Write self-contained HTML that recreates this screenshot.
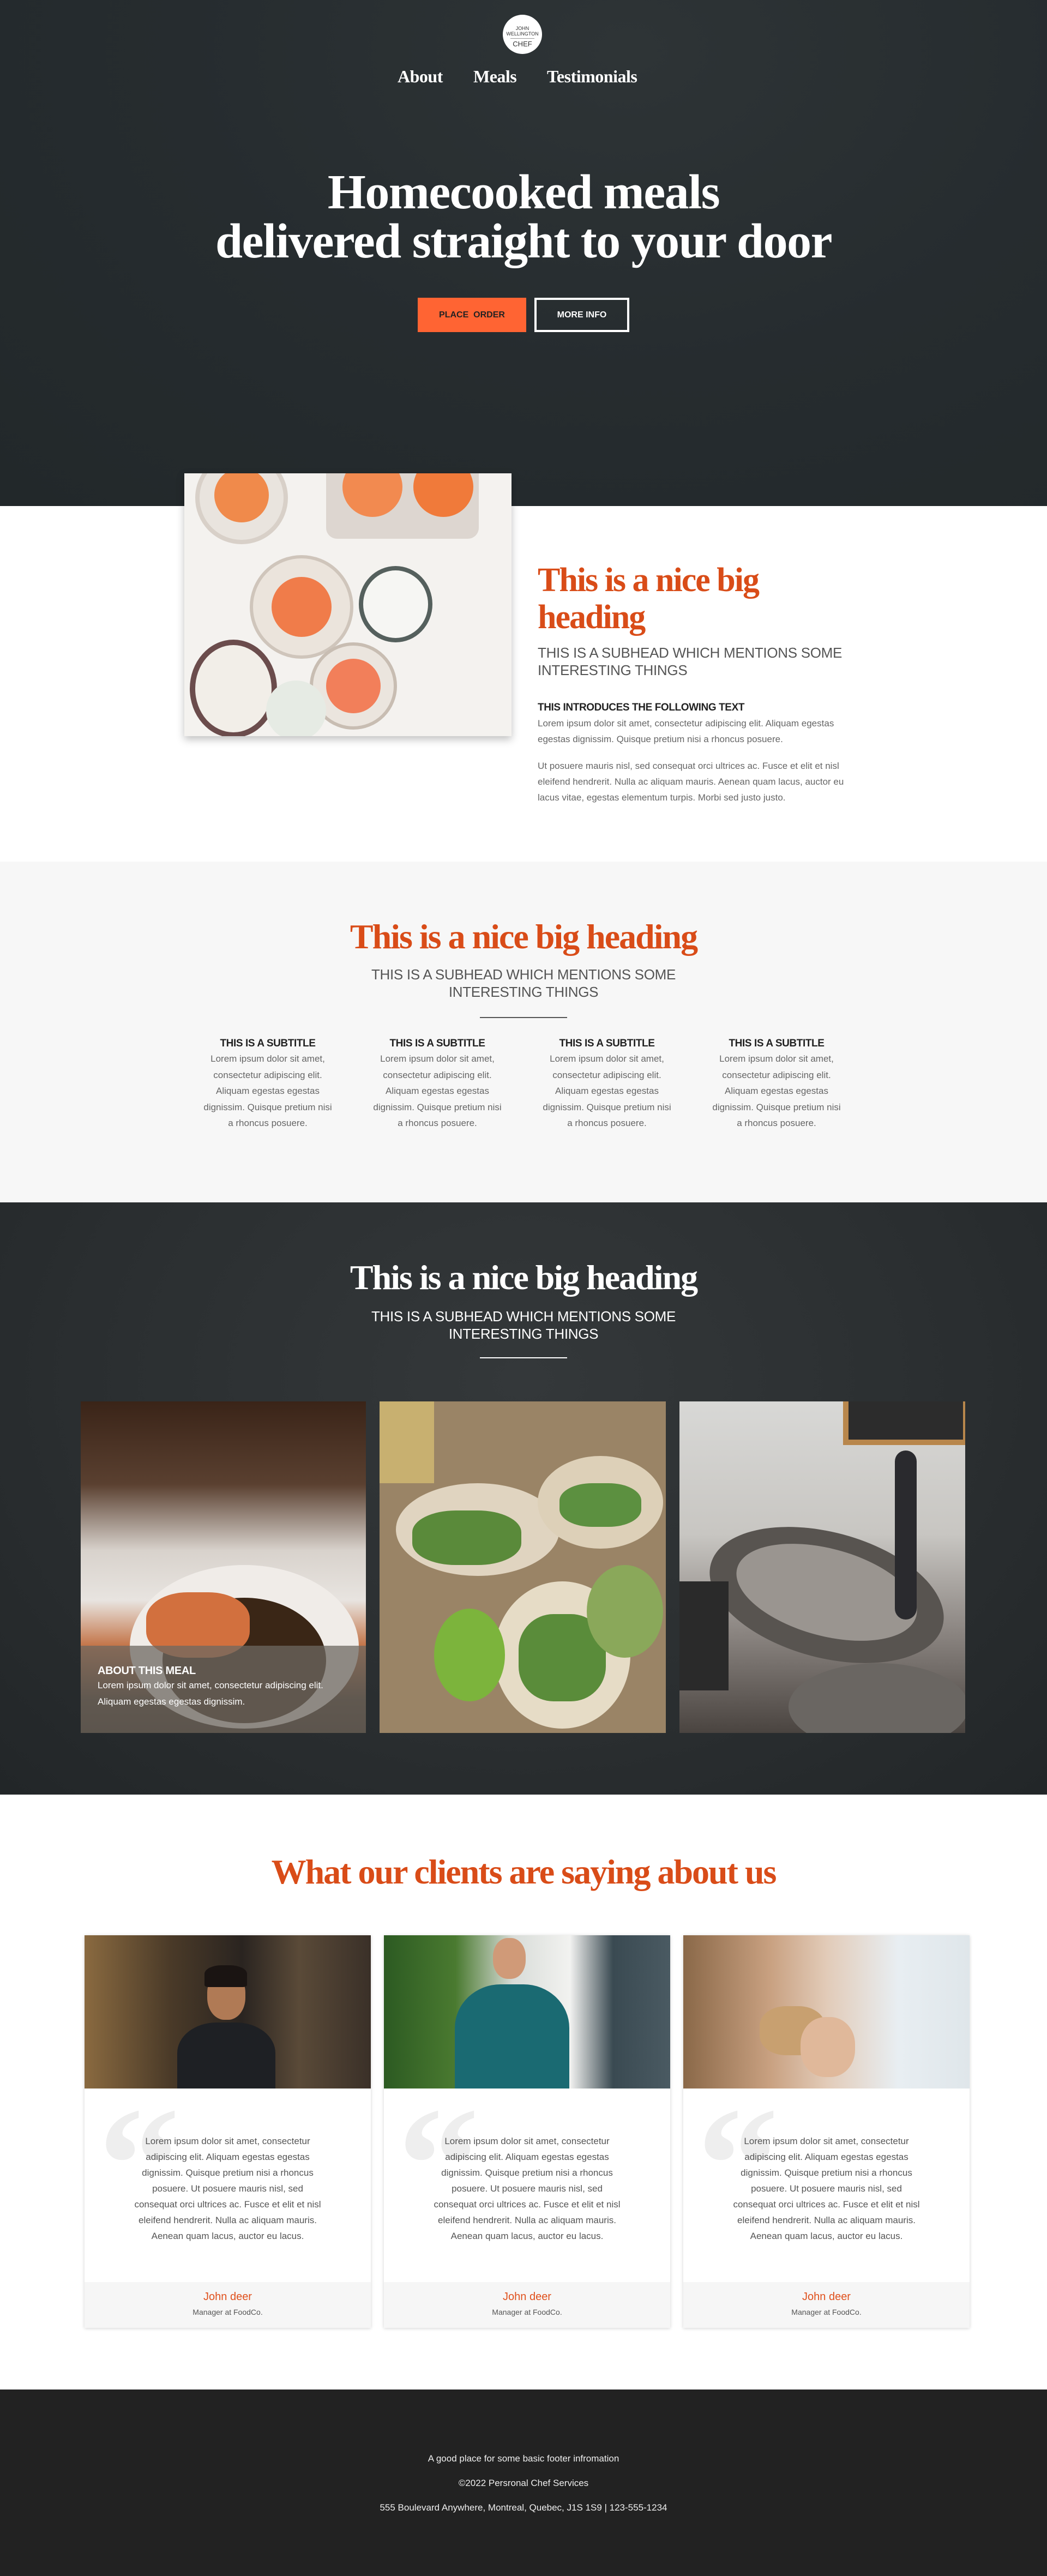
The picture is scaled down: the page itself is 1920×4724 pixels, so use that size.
<!DOCTYPE html>
<html><head><meta charset="utf-8"><style>
*{margin:0;padding:0;box-sizing:border-box}
body{width:1920px;height:4724px;position:relative;font-family:"Liberation Sans",sans-serif;overflow:hidden;background:#fff}
.a{position:absolute}
.serif{font-family:"Liberation Serif",serif;font-weight:bold;letter-spacing:-1.5px}
.c{text-align:center;left:0;width:1920px}
.or{color:#d94c18}
.sub{font-size:26px;color:#555;line-height:32px;letter-spacing:-0.3px}
.p{font-size:17px;color:#666;line-height:29px}
</style></head><body>

<!-- HERO -->
<div class="a" style="left:0;top:0;width:1920px;height:928px;background:radial-gradient(ellipse at 60% 10%,#2e3436 0%,#262c2f 50%,#22282a 100%)"></div>
<div class="a" style="left:922px;top:27px;width:72px;height:72px;border-radius:50%;background:#fff;text-align:center;font-size:9px;color:#333;line-height:10px;padding-top:20px">JOHN<br>WELLINGTON<div style="width:44px;height:1px;background:#999;margin:3px auto"></div><span style="font-size:13px;line-height:14px">CHEF</span></div>
<div class="a serif" style="left:729px;top:122px;font-size:32px;color:#fff;letter-spacing:-0.5px">About</div>
<div class="a serif" style="left:868px;top:122px;font-size:32px;color:#fff;letter-spacing:-0.5px">Meals</div>
<div class="a serif" style="left:1003px;top:122px;font-size:32px;color:#fff;letter-spacing:-0.5px">Testimonials</div>
<div class="a serif c" style="top:308px;font-size:90px;line-height:90px;color:#fff;letter-spacing:-1.5px">Homecooked meals<br>delivered straight to your door</div>
<div class="a" style="left:766px;top:546px;width:199px;height:63px;background:#ff6433;color:#222;font-size:16px;font-weight:bold;text-align:center;line-height:63px">PLACE&nbsp; ORDER</div>
<div class="a" style="left:980px;top:546px;width:174px;height:63px;border:4px solid #fff;color:#fff;font-size:16px;font-weight:bold;text-align:center;line-height:55px">MORE INFO</div>

<!-- SECTION 2 -->
<div class="a" style="left:338px;top:868px;width:600px;height:482px;background:#f4f2ef;box-shadow:0 6px 14px rgba(0,0,0,0.25);overflow:hidden">
 <div class="a" style="left:20px;top:-40px;width:170px;height:170px;border-radius:50%;background:#e9e4de;border:8px solid #d8d0c8"></div>
 <div class="a" style="left:55px;top:-10px;width:100px;height:100px;border-radius:50%;background:#f08a4b"></div>
 <div class="a" style="left:260px;top:-40px;width:280px;height:160px;border-radius:20px;background:#ddd6d0"></div>
 <div class="a" style="left:290px;top:-30px;width:110px;height:110px;border-radius:50%;background:#f28a50"></div>
 <div class="a" style="left:420px;top:-30px;width:110px;height:110px;border-radius:50%;background:#f07a3a"></div>
 <div class="a" style="left:120px;top:150px;width:190px;height:190px;border-radius:50%;background:#ebe4dc;border:6px solid #cfc5bb"></div>
 <div class="a" style="left:160px;top:190px;width:110px;height:110px;border-radius:50%;background:#f07c4a"></div>
 <div class="a" style="left:320px;top:170px;width:135px;height:140px;border-radius:50%;background:#f6f6f3;border:8px solid #55605d"></div>
 <div class="a" style="left:10px;top:305px;width:160px;height:180px;border-radius:50%;background:#f2eee8;border:10px solid #6b4c4c"></div>
 <div class="a" style="left:230px;top:310px;width:160px;height:160px;border-radius:50%;background:#ebe5de;border:6px solid #c8bdb2"></div>
 <div class="a" style="left:260px;top:340px;width:100px;height:100px;border-radius:50%;background:#f27f5a"></div>
 <div class="a" style="left:150px;top:380px;width:110px;height:110px;border-radius:50%;background:#e6ebe4"></div>
</div>
<div class="a serif or" style="left:986px;top:1030px;font-size:62px;line-height:68px;letter-spacing:-2px">This is a nice big<br>heading</div>
<div class="a sub" style="left:986px;top:1181px">THIS IS A SUBHEAD WHICH MENTIONS SOME<br>INTERESTING THINGS</div>
<div class="a" style="left:986px;top:1287px;font-size:19px;font-weight:bold;color:#222;letter-spacing:-0.4px">THIS INTRODUCES THE FOLLOWING TEXT</div>
<div class="a p" style="left:986px;top:1312px;width:620px">Lorem ipsum dolor sit amet, consectetur adipiscing elit. Aliquam egestas<br>egestas dignissim. Quisque pretium nisi a rhoncus posuere.</div>
<div class="a p" style="left:986px;top:1390px;width:620px">Ut posuere mauris nisl, sed consequat orci ultrices ac. Fusce et elit et nisl<br>eleifend hendrerit. Nulla ac aliquam mauris. Aenean quam lacus, auctor eu<br>lacus vitae, egestas elementum turpis. Morbi sed justo justo.</div>

<!-- SECTION 3 -->
<div class="a" style="left:0;top:1580px;width:1920px;height:625px;background:#f7f7f7"></div>
<div class="a serif or c" style="top:1680px;font-size:64px;line-height:76px;letter-spacing:-2px">This is a nice big heading</div>
<div class="a sub c" style="top:1771px">THIS IS A SUBHEAD WHICH MENTIONS SOME<br>INTERESTING THINGS</div>
<div class="a" style="left:880px;top:1865px;width:160px;height:2px;background:#555"></div>
<div class="a" style="left:361px;top:1901px;width:1250px;display:flex">
 <div style="width:260px;margin-right:51px;text-align:center"><div style="font-size:19px;font-weight:bold;color:#222;letter-spacing:-0.4px;line-height:26px">THIS IS A SUBTITLE</div><div class="p" style="line-height:29.5px;padding:0 6px">Lorem ipsum dolor sit amet, consectetur adipiscing elit. Aliquam egestas egestas dignissim. Quisque pretium nisi a rhoncus posuere.</div></div>
 <div style="width:260px;margin-right:51px;text-align:center"><div style="font-size:19px;font-weight:bold;color:#222;letter-spacing:-0.4px;line-height:26px">THIS IS A SUBTITLE</div><div class="p" style="line-height:29.5px;padding:0 6px">Lorem ipsum dolor sit amet, consectetur adipiscing elit. Aliquam egestas egestas dignissim. Quisque pretium nisi a rhoncus posuere.</div></div>
 <div style="width:260px;margin-right:51px;text-align:center"><div style="font-size:19px;font-weight:bold;color:#222;letter-spacing:-0.4px;line-height:26px">THIS IS A SUBTITLE</div><div class="p" style="line-height:29.5px;padding:0 6px">Lorem ipsum dolor sit amet, consectetur adipiscing elit. Aliquam egestas egestas dignissim. Quisque pretium nisi a rhoncus posuere.</div></div>
 <div style="width:260px;text-align:center"><div style="font-size:19px;font-weight:bold;color:#222;letter-spacing:-0.4px;line-height:26px">THIS IS A SUBTITLE</div><div class="p" style="line-height:29.5px;padding:0 6px">Lorem ipsum dolor sit amet, consectetur adipiscing elit. Aliquam egestas egestas dignissim. Quisque pretium nisi a rhoncus posuere.</div></div>
</div>

<!-- SECTION 4 -->
<div class="a" style="left:0;top:2205px;width:1920px;height:1086px;background:radial-gradient(ellipse at 50% 30%,#34383a 0%,#2a2e30 60%,#222628 100%)"></div>
<div class="a serif c" style="top:2305px;font-size:64px;line-height:76px;color:#fff;letter-spacing:-2px">This is a nice big heading</div>
<div class="a sub c" style="top:2398px;color:#fff">THIS IS A SUBHEAD WHICH MENTIONS SOME<br>INTERESTING THINGS</div>
<div class="a" style="left:880px;top:2489px;width:160px;height:2px;background:#fff"></div>
<div class="a" style="left:148px;top:2570px;width:523px;height:608px;overflow:hidden;background:linear-gradient(180deg,#3a2418 0%,#5a4030 25%,#d8d2cc 45%,#e8e4e0 60%,#c06a3a 75%,#3a2a1c 90%,#2a1c12 100%)">
 <div class="a" style="left:90px;top:300px;width:420px;height:300px;border-radius:50%;background:#f0ece8"></div>
 <div class="a" style="left:150px;top:360px;width:300px;height:230px;border-radius:50%;background:#3a2616"></div>
 <div class="a" style="left:120px;top:350px;width:190px;height:120px;border-radius:40%;background:#d2703e"></div>
 <div class="a" style="left:0;top:448px;width:523px;height:160px;background:rgba(110,104,98,0.75)"></div>
 <div class="a" style="left:31px;top:483px;font-size:20px;font-weight:bold;color:#fff;letter-spacing:-0.3px">ABOUT THIS MEAL</div>
 <div class="a" style="left:31px;top:506px;font-size:17px;line-height:30px;color:#fff">Lorem ipsum dolor sit amet, consectetur adipiscing elit.<br>Aliquam egestas egestas dignissim.</div>
</div>
<div class="a" style="left:696px;top:2570px;width:525px;height:608px;overflow:hidden;background:#9a8466">
 <div class="a" style="left:0;top:0;width:100px;height:150px;background:#c8b070"></div>
 <div class="a" style="left:30px;top:150px;width:300px;height:170px;border-radius:50%;background:#e0d4c0"></div>
 <div class="a" style="left:290px;top:100px;width:230px;height:170px;border-radius:50%;background:#ddd0b8"></div>
 <div class="a" style="left:60px;top:200px;width:200px;height:100px;background:#5a8a3a;border-radius:40%"></div>
 <div class="a" style="left:330px;top:150px;width:150px;height:80px;background:#5c9040;border-radius:40%"></div>
 <div class="a" style="left:210px;top:330px;width:250px;height:270px;border-radius:50%;background:#e6dcc6"></div>
 <div class="a" style="left:100px;top:380px;width:130px;height:170px;border-radius:50%;background:#7cb43c"></div>
 <div class="a" style="left:255px;top:390px;width:160px;height:160px;background:#5a8c3a;border-radius:40%"></div>
 <div class="a" style="left:380px;top:300px;width:140px;height:170px;border-radius:50%;background:#8aa85a"></div>
</div>
<div class="a" style="left:1246px;top:2570px;width:524px;height:608px;overflow:hidden;background:linear-gradient(180deg,#d8d8d6 0%,#c8c6c2 40%,#8a8480 70%,#4a4440 100%)">
 <div class="a" style="left:300px;top:0;width:230px;height:80px;background:#b8874c"></div>
 <div class="a" style="left:310px;top:0;width:210px;height:70px;background:#2c2c2c"></div>
 <div class="a" style="left:50px;top:240px;width:440px;height:230px;border-radius:50%;background:#585450;transform:rotate(15deg)"></div>
 <div class="a" style="left:100px;top:270px;width:340px;height:160px;border-radius:50%;background:#9a9590;transform:rotate(15deg)"></div>
 <div class="a" style="left:0;top:330px;width:90px;height:200px;background:#2a2a2a"></div>
 <div class="a" style="left:200px;top:480px;width:330px;height:160px;border-radius:50%;background:#6a6662"></div>
 <div class="a" style="left:395px;top:90px;width:40px;height:310px;background:#2a2a2e;border-radius:20px"></div>
</div>

<!-- SECTION 5 -->
<div class="a serif or c" style="top:3395px;font-size:64px;line-height:76px;letter-spacing:-2px">What our clients are saying about us</div>

<div class="a" style="left:155px;top:3549px;width:525px;height:720px;background:#fff;box-shadow:0 1px 6px rgba(0,0,0,0.18)">
 <div style="height:281px;background:linear-gradient(90deg,#8a6a40 0%,#4a3a28 30%,#2a2420 55%,#5a4a38 75%,#3a3028 100%);position:relative;overflow:hidden">
  <div class="a" style="left:225px;top:65px;width:70px;height:90px;border-radius:45%;background:#b07a55"></div>
  <div class="a" style="left:220px;top:55px;width:78px;height:40px;border-radius:40% 40% 10% 10%;background:#1a1412"></div>
  <div class="a" style="left:170px;top:160px;width:180px;height:140px;border-radius:40% 40% 0 0;background:#1e2024"></div>
 </div>
</div>
<div class="a" style="left:704px;top:3549px;width:525px;height:720px;background:#fff;box-shadow:0 1px 6px rgba(0,0,0,0.18)">
 <div style="height:281px;background:linear-gradient(90deg,#2c5a22 0%,#4a7a30 25%,#d8dcd8 45%,#f2f2f0 65%,#3a4a52 80%,#4a5a62 100%);position:relative;overflow:hidden">
  <div class="a" style="left:200px;top:5px;width:60px;height:75px;border-radius:45%;background:#d09a78"></div>
  <div class="a" style="left:130px;top:90px;width:210px;height:200px;border-radius:40% 40% 0 0;background:#1a6a72"></div>
 </div>
</div>
<div class="a" style="left:1253px;top:3549px;width:525px;height:720px;background:#fff;box-shadow:0 1px 6px rgba(0,0,0,0.18)">
 <div style="height:281px;background:linear-gradient(90deg,#8a6848 0%,#c8a080 30%,#e2cbb8 50%,#e8eef2 75%,#dfe6ea 100%);position:relative;overflow:hidden">
  <div class="a" style="left:140px;top:130px;width:120px;height:90px;border-radius:40%;background:#c8a070"></div>
  <div class="a" style="left:215px;top:150px;width:100px;height:110px;border-radius:45%;background:#e0b89a"></div>
 </div>
</div>

<div class="a" style="left:155px;top:3549px;width:1623px;height:720px">
 <div class="a" style="left:0;top:636px;width:525px;height:84px;background:#f6f6f6"></div>
 <div class="a" style="left:549px;top:636px;width:525px;height:84px;background:#f6f6f6"></div>
 <div class="a" style="left:1098px;top:636px;width:525px;height:84px;background:#f6f6f6"></div>
</div>

<div class="a" style="left:155px;top:3549px;width:1623px">
 <div class="a" style="left:0;width:525px">
  <div class="a" style="left:25px;top:270px;font-family:'Liberation Serif',serif;font-size:300px;line-height:300px;color:#eee;font-weight:bold">“</div>
  <div class="a" style="left:85px;top:363px;width:355px;text-align:center;font-size:17px;line-height:29px;color:#555">Lorem ipsum dolor sit amet, consectetur adipiscing elit. Aliquam egestas egestas dignissim. Quisque pretium nisi a rhoncus posuere. Ut posuere mauris nisl, sed consequat orci ultrices ac. Fusce et elit et nisl eleifend hendrerit. Nulla ac aliquam mauris. Aenean quam lacus, auctor eu lacus.</div>
  <div class="a" style="left:0;top:652px;width:525px;text-align:center;font-size:20px;color:#e0501c">John deer</div>
  <div class="a" style="left:0;top:683px;width:525px;text-align:center;font-size:14px;color:#555">Manager at FoodCo.</div>
 </div>
 <div class="a" style="left:549px;width:525px">
  <div class="a" style="left:25px;top:270px;font-family:'Liberation Serif',serif;font-size:300px;line-height:300px;color:#eee;font-weight:bold">“</div>
  <div class="a" style="left:85px;top:363px;width:355px;text-align:center;font-size:17px;line-height:29px;color:#555">Lorem ipsum dolor sit amet, consectetur adipiscing elit. Aliquam egestas egestas dignissim. Quisque pretium nisi a rhoncus posuere. Ut posuere mauris nisl, sed consequat orci ultrices ac. Fusce et elit et nisl eleifend hendrerit. Nulla ac aliquam mauris. Aenean quam lacus, auctor eu lacus.</div>
  <div class="a" style="left:0;top:652px;width:525px;text-align:center;font-size:20px;color:#e0501c">John deer</div>
  <div class="a" style="left:0;top:683px;width:525px;text-align:center;font-size:14px;color:#555">Manager at FoodCo.</div>
 </div>
 <div class="a" style="left:1098px;width:525px">
  <div class="a" style="left:25px;top:270px;font-family:'Liberation Serif',serif;font-size:300px;line-height:300px;color:#eee;font-weight:bold">“</div>
  <div class="a" style="left:85px;top:363px;width:355px;text-align:center;font-size:17px;line-height:29px;color:#555">Lorem ipsum dolor sit amet, consectetur adipiscing elit. Aliquam egestas egestas dignissim. Quisque pretium nisi a rhoncus posuere. Ut posuere mauris nisl, sed consequat orci ultrices ac. Fusce et elit et nisl eleifend hendrerit. Nulla ac aliquam mauris. Aenean quam lacus, auctor eu lacus.</div>
  <div class="a" style="left:0;top:652px;width:525px;text-align:center;font-size:20px;color:#e0501c">John deer</div>
  <div class="a" style="left:0;top:683px;width:525px;text-align:center;font-size:14px;color:#555">Manager at FoodCo.</div>
 </div>
</div>

<!-- FOOTER -->
<div class="a" style="left:0;top:4382px;width:1920px;height:342px;background:#222"></div>
<div class="a c" style="top:4486px;font-size:17px;line-height:45px;color:#eee">A good place for some basic footer infromation<br>©2022 Persronal Chef Services<br>555 Boulevard Anywhere, Montreal, Quebec, J1S 1S9 | 123-555-1234</div>
</body></html>
